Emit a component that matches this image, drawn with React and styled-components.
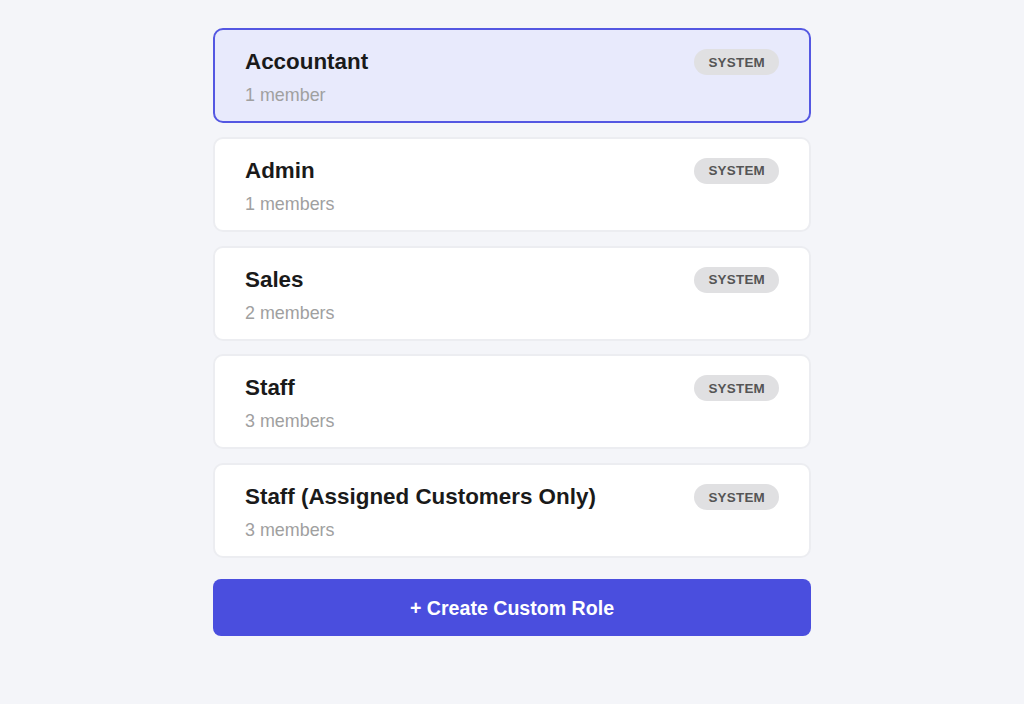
import React from "react";
import styled, { createGlobalStyle } from "styled-components";

const Global = createGlobalStyle`
  html, body { margin: 0; padding: 0; background: #f4f5f9; }
  body { font-family: "Liberation Sans", Arial, sans-serif; }
`;

const Page = styled.div`
  display: flex;
  justify-content: center;
  padding-top: 28px;
  min-height: 704px;
  box-sizing: border-box;
`;

const List = styled.div`
  width: 598px;
  display: flex;
  flex-direction: column;
  gap: 13.75px;
`;

const Card = styled.div`
  box-sizing: border-box;
  height: 95px;
  border: 2px solid ${(p) => (p.$selected ? "#5457e2" : "#ecedf1")};
  background: ${(p) => (p.$selected ? "#e8eafc" : "#ffffff")};
  border-radius: 10px;
  padding: 19px 30px 0 30px;
  display: flex;
  justify-content: space-between;
  align-items: flex-start;
`;

const Info = styled.div`
  display: flex;
  flex-direction: column;
`;

const Title = styled.div`
  font-size: 22.4px;
  line-height: 25px;
  font-weight: 700;
  color: #1a1a1a;
`;

const Sub = styled.div`
  margin-top: 11px;
  font-size: 17.9px;
  line-height: 21px;
  color: #a0a0a0;
`;

const Badge = styled.span`
  height: 26px;
  box-sizing: border-box;
  padding: 0 14px;
  border-radius: 13px;
  background: #e0e0e2;
  color: #555;
  font-size: 13.4px;
  font-weight: 700;
  letter-spacing: 0.25px;
  display: inline-flex;
  align-items: center;
`;

const Button = styled.button`
  margin-top: 7px;
  height: 57px;
  padding-top: 3px;
  border: none;
  border-radius: 8px;
  background: #4a4ede;
  color: #fff;
  font-family: "Liberation Sans", Arial, sans-serif;
  font-size: 19.6px;
  font-weight: 700;
  cursor: pointer;
`;

const roles = [
  { name: "Accountant", members: "1 member", selected: true },
  { name: "Admin", members: "1 members" },
  { name: "Sales", members: "2 members" },
  { name: "Staff", members: "3 members" },
  { name: "Staff (Assigned Customers Only)", members: "3 members" },
];

export default function App() {
  return (
    <>
      <Global />
      <Page>
        <List>
          {roles.map((r) => (
            <Card key={r.name} $selected={r.selected}>
              <Info>
                <Title>{r.name}</Title>
                <Sub>{r.members}</Sub>
              </Info>
              <Badge>SYSTEM</Badge>
            </Card>
          ))}
          <Button>+ Create Custom Role</Button>
        </List>
      </Page>
    </>
  );
}
